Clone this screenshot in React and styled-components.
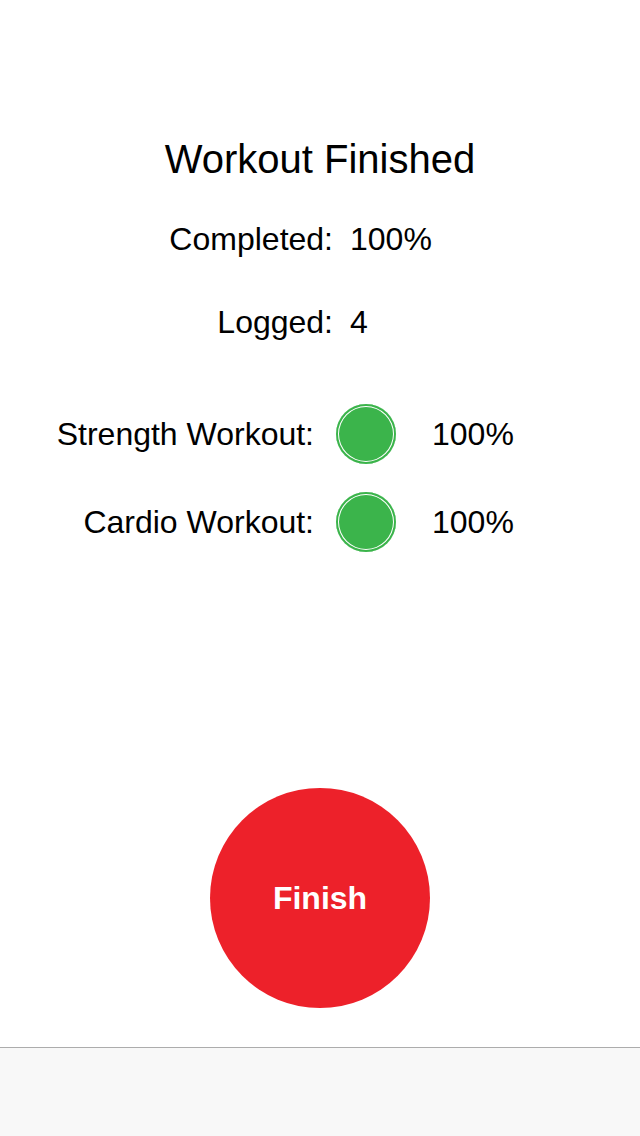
import React from "react";
import styled, { createGlobalStyle } from "styled-components";

const Global = createGlobalStyle`
  html, body { margin: 0; padding: 0; background: #fff; }
  body { font-family: "Liberation Sans", Arial, Helvetica, sans-serif; color: #000; }
`;

const Page = styled.div`
  width: 640px;
  height: 1136px;
  display: flex;
  flex-direction: column;
  background: #fff;
  overflow: hidden;
`;

const Content = styled.main`
  flex: 1;
  display: flex;
  flex-direction: column;
  padding-top: 135px;
`;

const Title = styled.h1`
  margin: 0 0 36px;
  font-size: 40px;
  line-height: 48px;
  font-weight: 400;
  text-align: center;
`;

const StatRow = styled.div`
  display: grid;
  grid-template-columns: 333px 1fr;
  column-gap: 17px;
  font-size: 32px;
  line-height: 40px;
  margin-bottom: ${(p) => p.$gap}px;
`;

const Label = styled.span`
  text-align: right;
  white-space: nowrap;
`;

const Value = styled.span`
  white-space: nowrap;
`;

const WorkoutRow = styled.div`
  display: grid;
  grid-template-columns: 314px 60px 1fr;
  column-gap: 22px;
  align-items: center;
  font-size: 32px;
  line-height: 40px;
  margin-bottom: ${(p) => p.$gap}px;
`;

const WorkoutValue = styled.span`
  padding-left: 14px;
  white-space: nowrap;
`;

const Dot = styled.span`
  display: block;
  width: 60px;
  height: 60px;
  border-radius: 50%;
  background: #3bb44b;
  box-shadow: inset 0 0 0 2px #3bb44b, inset 0 0 0 3px #ffffff;
`;

const FinishButton = styled.button`
  align-self: center;
  width: 220px;
  height: 220px;
  border-radius: 50%;
  border: none;
  padding: 0;
  margin-bottom: 39px;
  background: #ed212a;
  color: #fff;
  font-family: "Liberation Sans", Arial, Helvetica, sans-serif;
  font-size: 32px;
  line-height: 40px;
  font-weight: 700;
  display: flex;
  align-items: center;
  justify-content: center;
  cursor: pointer;
`;

const TabBar = styled.footer`
  height: 88px;
  flex-shrink: 0;
  border-top: 1px solid #acacac;
  background: #f8f8f8;
`;

const workouts = [
  { name: "Strength Workout:", value: "100%" },
  { name: "Cardio Workout:", value: "100%" },
];

export default function App() {
  return (
    <Page>
      <Global />
      <Content>
        <Title>Workout Finished</Title>
        <StatRow $gap={43}>
          <Label>Completed:</Label>
          <Value>100%</Value>
        </StatRow>
        <StatRow $gap={62}>
          <Label>Logged:</Label>
          <Value>4</Value>
        </StatRow>
        {workouts.map((w) => (
          <WorkoutRow key={w.name} $gap={28}>
            <Label>{w.name}</Label>
            <Dot />
            <WorkoutValue>{w.value}</WorkoutValue>
          </WorkoutRow>
        ))}
      </Content>
      <FinishButton>Finish</FinishButton>
      <TabBar />
    </Page>
  );
}
